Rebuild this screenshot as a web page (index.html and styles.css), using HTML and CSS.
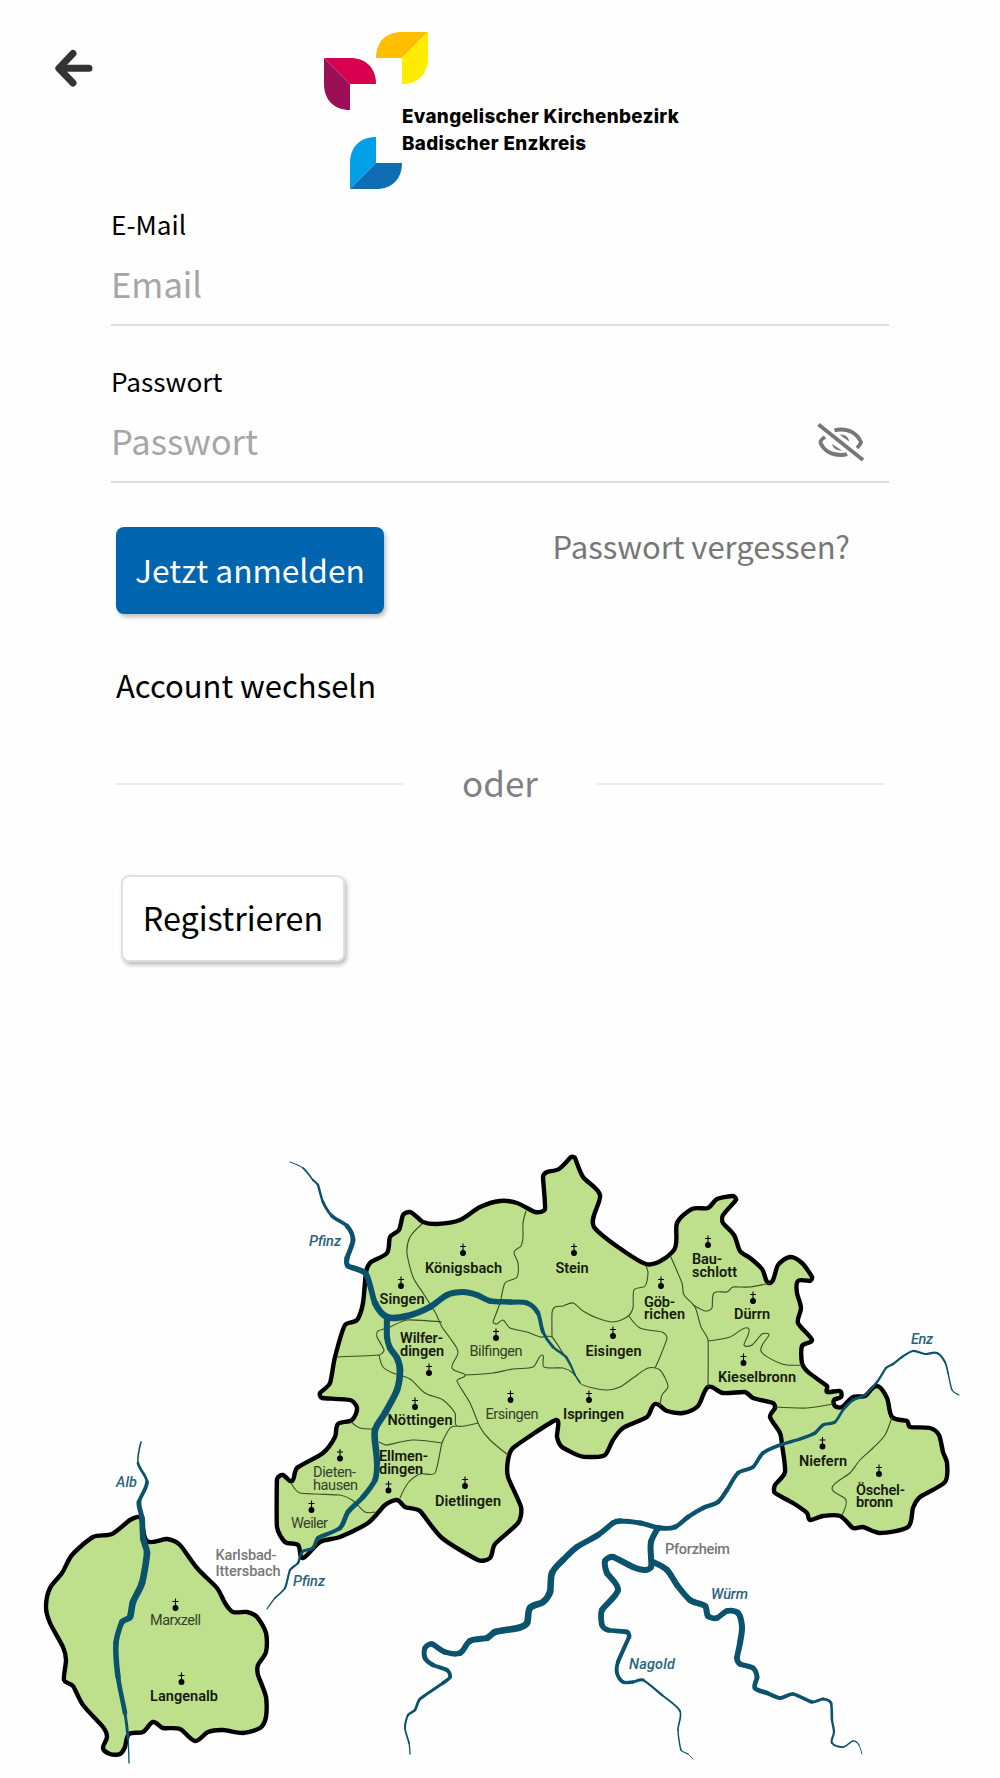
FILE: index.html
```html
<!DOCTYPE html>
<html lang="de">
<head>
<meta charset="utf-8" />
<title>Anmelden</title>
<link rel="stylesheet" href="styles.css">
</head>
<body>
<header class="top">
	<a class="back" href="#" aria-label="Zurück">
		<svg width="40" height="40" viewBox="0 0 40 40"><path d="M35 20.3H6M19 5.5L4.8 20.3L19 35" /></svg>
	</a>
	<svg class="logo" width="360" height="160" viewBox="0 0 360 160">
		<path fill="#ffbf00" d="M78 0H104L78 26H52C52 10 62 0 78 0Z" />
		<path fill="#ffed00" d="M104 0V26C104 42 94 52 78 52V26Z" />
		<path fill="#d6004f" d="M0 26H26C42 26 52 36 52 52H26Z" />
		<path fill="#9c0f57" d="M0 26L26 52V78C10 78 0 68 0 52Z" />
		<path fill="#009fe6" d="M52 105V131L26 157V131C26 115 36 105 52 105Z" />
		<path fill="#0f6db4" d="M52 131H78C78 147 68 157 52 157H26Z" />
		<text x="78" y="91.2" textLength="277">Evangelischer Kirchenbezirk</text>
		<text x="78" y="118" textLength="184">Badischer Enzkreis</text>
	</svg>
</header>

<form class="login">
	<label for="email">E-Mail</label>
	<div class="field"><input id="email" type="email" placeholder="Email" /></div>
	<label for="password">Passwort</label>
	<div class="field">
		<input id="password" type="password" placeholder="Passwort" />
		<svg class="eye" width="50" height="46" viewBox="0 0 50 46">
			<path d="M9 18C6 20 4 22 4.500 24C8 32 16 36 25 36C28 36 29 36 31 35M18.500 11.500C20 11 22 10.500 25 10.500C34 10.500 42 15 45 23.500C44 26 43 27 41 29" />
			<path class="pupil" d="M23.500 15.500C29 15 33 18 33 22.500ZM16 25C17 29 20 31.500 26 31.500Z" />
			<path d="M2.500 5.500L47 41" />
		</svg>
	</div>
	<div class="actions">
		<button class="btn primary" type="button">Jetzt anmelden</button>
		<a class="forgot" href="#">Passwort vergessen?</a>
	</div>
	<a class="switch" href="#">Account wechseln</a>
	<div class="or"><span>oder</span></div>
	<button class="btn register" type="button">Registrieren</button>
</form>

<svg class="map" width="1000" height="658" viewBox="0 1120 1000 658">
	<defs>
		<g id="church"><circle r="2.4" /><path d="M0 0V-9.5M-3 -6.5H3" /></g>
	</defs>
	<g class="region">
		<path data-close="1" data-pts="366,1272 371,1262 387,1253 390,1237 399,1230 403,1215 410,1212 417,1217 423,1222 437,1224 460,1220 480,1207 500,1201 517,1203 535,1212 545,1209 543,1177 547,1172 559,1169 571,1157 575,1158 583,1177 600,1195 594,1227 646,1264 674,1250 677,1223 692,1209 708,1208 717,1199 733,1196 736,1200 723,1215 723,1223 734,1235 740,1251 750,1258 762,1269 770,1283 778,1265 790,1257 802,1263 812,1277 810,1281 798,1281 797,1293 801,1308 798,1323 812,1340 802,1346 802,1363 808,1372 827,1386 827,1392 840,1391 841,1397 834,1400 835,1406 842,1407 853,1397 865,1396 877,1386 887,1398 892,1417 907,1421 910,1427 930,1428 939,1435 943,1452 947,1463 945,1482 920,1497 913,1508 908,1527 880,1533 863,1527 853,1528 840,1516 823,1516 810,1520 807,1513 793,1503 775,1493 775,1485 785,1472 782,1445 780,1433 770,1417 775,1408 773,1403 753,1398 745,1392 723,1393 708,1387 698,1406 683,1413 667,1411 655,1404 647,1417 623,1428 613,1440 605,1455 592,1457 580,1456 562,1447 557,1437 556,1420 513,1448 508,1460 508,1477 521,1507 518,1523 495,1544 490,1558 478,1560 442,1538 420,1511 405,1507 397,1500 385,1505 368,1523 340,1537 320,1542 303,1558 298,1545 285,1542 277,1527 277,1479 283,1475 292,1481 297,1468 323,1453 335,1437 338,1424 352,1420 357,1408 350,1400 322,1398 320,1393 330,1383 335,1357 345,1325 357,1320 363,1303" />
		<path data-close="1" data-pts="141,1518 130,1520 112,1534 93,1537 72,1555 62,1573 50,1588 46,1607 50,1623 63,1647 66,1660 64,1680 73,1686 83,1705 103,1727 107,1737 103,1748 110,1754 120,1754 125,1747 129,1734 143,1732 153,1722 163,1728 180,1729 195,1741 208,1732 223,1730 243,1733 260,1728 266,1717 266,1697 258,1675 258,1665 266,1652 266,1633 257,1617 247,1612 233,1612 225,1603 217,1588 197,1568 180,1545 167,1539 147,1541" />
	</g>
	<g class="border">
		<path data-pts="422,1224 410,1237 407,1253 413,1277 423,1293 435,1312 442,1327 450,1338 458,1352 452,1368 465,1375 457,1381 470,1403 480,1427 490,1440 508,1455" />
		<path data-pts="526,1211 523,1223 523,1237 521,1246 514,1252 518,1263 517,1277 505,1283 500,1303 493,1322 497,1324 503,1320 510,1328 527,1332 540,1337 552,1337 567,1360 580,1383 593,1388 607,1390 620,1387 633,1378 648,1368 660,1370 668,1386 662,1395 660,1406" />
		<path data-pts="552,1337 552,1313 555,1307 563,1306 573,1303 583,1311 597,1318 613,1322 627,1317 633,1308 634,1290 645,1286 648,1273 646,1266" />
		<path data-pts="629,1316 640,1328 662,1332 667,1338 660,1357 655,1368" />
		<path data-pts="670,1255 682,1283 684,1295 695,1307 701,1327 708,1340 708,1387" />
		<path data-pts="693,1305 705,1311 712,1308 714,1293 727,1292 733,1287 750,1287 770,1283" />
		<path data-pts="708,1341 730,1337 748,1328 744,1345 752,1345 762,1334 769,1335 761,1351 782,1364 802,1365" />
		<path data-pts="775,1407 807,1408 833,1404" />
		<path data-pts="892,1417 885,1435 873,1448 860,1460 850,1473 832,1488 846,1500 842,1515" />
		<path data-pts="337,1357 379,1355 384,1350 377,1337 378,1331 390,1327 407,1320 442,1322" />
		<path data-pts="379,1355 383,1367 393,1373 410,1379 425,1393 443,1400 455,1413 457,1426 478,1423" />
		<path data-pts="457,1426 450,1428 442,1443 435,1473 420,1474 408,1483 400,1498" />
		<path data-pts="379,1442 387,1445 413,1440 442,1443" />
		<path data-pts="351,1422 360,1428 373,1429" />
		<path data-pts="291,1483 300,1493 340,1495 352,1500 365,1512 375,1512" />
		<path data-pts="465,1375 493,1373 513,1369 533,1367 542,1355 544,1367 563,1368 573,1373 580,1383" />
	</g>
	<!-- third value of a river point is its width -->
	<g class="river">
		<path data-pts="290,1162,.7 303,1168,1.2 313,1180,1.8 318,1185,2 323,1202,2.5 332,1216,3 347,1226,4 353,1240,4.5 347,1258,4.5 348,1266,5 366,1274,5 375,1303,5.5 387,1317,6 407,1316,6 430,1307,5.5 447,1295,5.5 463,1292,5.5 477,1295,5.5 490,1301,5 510,1302,5 527,1303,4.5 538,1313,4 543,1332,3 553,1347,2.5 567,1358,2 575,1375,1.5 580,1382,.7" />
		<path data-pts="387,1317,5.5 387,1337,5.5 390,1348,5.5 397,1358,6 400,1370,6 397,1390,6 385,1413,6 375,1430,6 376,1450,6 377,1463,5.5 375,1480,5 363,1497,4.5 348,1512,4.5 340,1528,4 318,1538,3.5 313,1548,3 302,1552,2.5 298,1563,2 290,1570,2 285,1588,1.8 275,1598,1.3 267,1609,.8" />
		<path data-pts="141,1442,.8 138,1463,2 147,1482,3 139,1502,4 142,1518,5 143,1538,5.5 147,1553,6 142,1583,6 133,1602,6 130,1617,6 122,1622,5 116,1643,5 118,1677,5 125,1713,3.5 128,1738,1.8 129,1763,.6" />
		<path data-pts="959,1395,.8 952,1390,1.2 948,1373,1.4 945,1362,1.7 937,1353,2 925,1354,2 913,1351,2 902,1357,2 893,1364,2 886,1368,2 877,1382,2 865,1395,2.5 853,1400,2.5 843,1410,2.5 835,1422,2.5 823,1425,3 815,1433,3 800,1439,3 780,1445,3 763,1453,3.5 753,1467,3.5 738,1473,3.5 727,1490,4 718,1502,4 703,1508,4 688,1517,4.2 675,1527,4.2 660,1528,4.5 640,1523,4.5 620,1521,4.8 613,1523,5 598,1535,5 577,1547,5.5 563,1560,5.5 552,1573,6 550,1592,6 543,1602,6 530,1608,6 527,1623,6 518,1628,6 495,1632,6 487,1638,5.5 470,1641,5.5 460,1653,5 445,1652,5 432,1644,5 425,1648,4.5 425,1658,4.5 433,1665,4 447,1670,3.5 450,1677,3.5 443,1683,3 420,1699,2.5 415,1710,2.5 408,1715,2 405,1728,1.8 409,1743,1.4 410,1754,1" />
		<path data-pts="658,1528,5.5 651,1542,5.5 651,1557,5.5 651,1567,5.5 645,1570,5.5 633,1567,5.5 613,1557,5.5 605,1561,5.5 607,1573,5.5 618,1590,5.5 602,1610,5.5 602,1625,5 608,1630,4.5 627,1632,4.2 629,1637,4 618,1662,3.5 617,1673,3.5 623,1682,3.2 633,1682,3 643,1680,2.5 662,1695,1.8 680,1711,1.6 678,1730,1.4 681,1750,1.2 688,1754,1 693,1759,.7" />
		<path data-pts="653,1562,5.5 667,1570,5.5 677,1585,5.5 690,1600,5.5 705,1606,5.5 708,1616,5.5 717,1618,5 727,1611,5 738,1613,5.5 742,1627,5.5 740,1643,5.5 737,1658,5 740,1664,5 753,1668,4.5 757,1677,4.5 755,1688,4.2 767,1693,4 780,1698,3.5 793,1694,3.2 812,1702,3 823,1699,2.7 831,1703,2.5 832,1720,2.2 834,1732,2 832,1743,1.8 843,1747,1.5 853,1741,1.3 859,1745,1 862,1754,.7" />
	</g>
	<g class="church">
		<use href="#church" x="401" y="1286" /><use href="#church" x="463" y="1253" />
		<use href="#church" x="574" y="1253" /><use href="#church" x="429" y="1373" />
		<use href="#church" x="496" y="1338" /><use href="#church" x="613" y="1336" />
		<use href="#church" x="708" y="1245" /><use href="#church" x="661" y="1286" />
		<use href="#church" x="753" y="1301" /><use href="#church" x="743.5" y="1363" />
		<use href="#church" x="510.5" y="1400" /><use href="#church" x="589" y="1400" />
		<use href="#church" x="415" y="1407" /><use href="#church" x="388.5" y="1490.5" />
		<use href="#church" x="340" y="1458.5" /><use href="#church" x="311.5" y="1510" />
		<use href="#church" x="465" y="1486" /><use href="#church" x="822.5" y="1446.5" />
		<use href="#church" x="879" y="1474" /><use href="#church" x="175.5" y="1608" />
		<use href="#church" x="181.5" y="1682" />
	</g>
	<g class="town">
		<text x="379.5" y="1303.5" textLength="45">Singen</text>
		<text x="425" y="1272.5" textLength="77">Königsbach</text>
		<text x="555.5" y="1272.5" textLength="33">Stein</text>
		<text x="400" y="1342.5" textLength="43">Wilfer-</text>
		<text x="400" y="1355.5" textLength="44">dingen</text>
		<text x="585.5" y="1355.5" textLength="56">Eisingen</text>
		<text x="692" y="1264" textLength="30">Bau-</text>
		<text x="692" y="1276.5" textLength="45">schlott</text>
		<text x="644" y="1306.5" textLength="31">Göb-</text>
		<text x="644" y="1318.5" textLength="41">richen</text>
		<text x="734" y="1318.5" textLength="36">Dürrn</text>
		<text x="718" y="1381.5" textLength="78">Kieselbronn</text>
		<text x="563" y="1419" textLength="61">Ispringen</text>
		<text x="387.5" y="1424.5" textLength="65">Nöttingen</text>
		<text x="379" y="1461" textLength="49">Ellmen-</text>
		<text x="379" y="1474" textLength="44">dingen</text>
		<text x="435" y="1506" textLength="66">Dietlingen</text>
		<text x="799" y="1465.5" textLength="48">Niefern</text>
		<text x="856" y="1494.5" textLength="49">Öschel-</text>
		<text x="856" y="1506.5" textLength="37">bronn</text>
		<text x="150" y="1700.5" textLength="68">Langenalb</text>
	</g>
	<g class="town small">
		<text x="469.5" y="1355.5" textLength="53">Bilfingen</text>
		<text x="485.5" y="1419" textLength="53">Ersingen</text>
		<text x="313" y="1476.5" textLength="43">Dieten-</text>
		<text x="313" y="1489.5" textLength="45">hausen</text>
		<text x="291" y="1528" textLength="37">Weiler</text>
		<text x="150" y="1624.5" textLength="51">Marxzell</text>
	</g>
	<g class="town outside">
		<text x="665" y="1553.5" textLength="65">Pforzheim</text>
		<text x="215.5" y="1559.5" textLength="61">Karlsbad-</text>
		<text x="215.5" y="1576" textLength="65">Ittersbach</text>
	</g>
	<g class="town water">
		<text x="309" y="1245.5" textLength="32">Pfinz</text>
		<text x="293" y="1585.5" textLength="32">Pfinz</text>
		<text x="911" y="1343.5" textLength="22">Enz</text>
		<text x="711" y="1598.5" textLength="37">Würm</text>
		<text x="629" y="1669" textLength="46">Nagold</text>
		<text x="116" y="1487" textLength="21">Alb</text>
	</g>
</svg>
<script src="map.js"></script>
</body>
</html>
```
FILE: styles.css
```css
* {
	box-sizing: border-box;
}

body {
	margin: 0;
	width: 1000px;
	height: 1778px;
	overflow: hidden;
	background-color: #fefefe;
	color: #000;
	font-family: "Noto Sans CJK SC", sans-serif;
	display: flex;
	flex-direction: column;
}

a {
	color: inherit;
	text-decoration: none;
}

.top {
	height: 206px;
	display: flex;
	align-items: flex-start;
	padding: 31.5px 0 0 54px;
}

.back {
	width: 40px;
	height: 40px;
	margin: 16.5px 230px 0 0;
}

.back path {
	fill: none;
	stroke: #333;
	stroke-width: 7;
	stroke-linecap: round;
	stroke-linejoin: round;
}

.logo text {
	font-family: Inter, sans-serif;
	font-weight: 800;
	font-size: 18.8px;
}

.login {
	height: 914px;
	padding: 0 111px;
	display: flex;
	flex-direction: column;
	align-items: flex-start;
}

.login label {
	font-size: 26.2px;
	line-height: 36px;
}

.field {
	width: 778px;
	height: 84px;
	margin-bottom: 37px;
	border-bottom: 2px solid #dedede;
	display: flex;
	align-items: center;
}

.field input {
	flex: 1;
	border: 0;
	padding: 0;
	background: none;
	font-family: inherit;
	font-size: 34.6px;
	line-height: 50px;
}

.field input::placeholder {
	color: #a6a6a6;
}

.eye {
	margin: 3px 23px 0 0;
	fill: none;
	stroke: #777;
	stroke-width: 3.8;
}

.eye .pupil {
	fill: #777;
	stroke: none;
}

.actions {
	width: 778px;
	margin-top: 7px;
	padding-left: 5px;
	display: flex;
	justify-content: space-between;
}

.btn {
	height: 87px;
	border: 0;
	border-radius: 8px;
	padding: 0 0 4px;
	font-family: inherit;
	font-size: 32.3px;
	box-shadow: 2px 3px 4px rgba(0, 0, 0, .25);
}

.primary {
	width: 268px;
	background-color: #0064af;
	color: #fff;
	font-size: 31.7px;
}

.forgot {
	margin-right: 39px;
	font-size: 31px;
	line-height: 37px;
	color: #777;
}

.switch {
	margin: 51px 0 0 5px;
	font-size: 31px;
	line-height: 40px;
}

.or {
	width: 768px;
	margin: 52px 0 0 5px;
	display: flex;
	align-items: center;
	font-size: 35px;
	line-height: 50px;
	color: #808080;
}

.or span {
	flex: 1;
	padding-bottom: 4px;
	text-align: center;
}

.or:before,
.or:after {
	content: "";
	width: 287px;
	height: 2px;
	background-color: #ececec;
}

.register {
	width: 224px;
	margin: 64px 0 0 10px;
	border: 2px solid #e0e0e0;
	background-color: #fff;
	color: #000;
}

.map {
	display: block;
}

.region path {
	fill: #bedf8b;
	stroke: #000;
	stroke-width: 4.4;
	stroke-linejoin: round;
}

.border path {
	fill: none;
	stroke: #3c4f26;
	stroke-width: 1.1;
}

.river path {
	fill: none;
	stroke: #0b536c;
	stroke-linecap: round;
}

.church {
	stroke: #000;
	stroke-width: 1.1;
}

.town {
	font-family: Roboto, sans-serif;
	font-size: 14.5px;
	font-weight: 600;
	fill: #151a10;
}

.small {
	font-weight: 400;
	fill: #34402a;
}

.outside {
	font-weight: 500;
	fill: #777;
}

.water {
	font-weight: 500;
	font-style: italic;
	fill: #2a6478;
}
```
FILE: map.js
```js
// handle of a curve at b, along a -> c, never longer than the shorter side
function handle(a, b, c) {
	var dx = c[0] - a[0], dy = c[1] - a[1];
	var len = Math.hypot(dx, dy) || 1;
	var side = Math.min(Math.hypot(b[0] - a[0], b[1] - a[1]), Math.hypot(c[0] - b[0], c[1] - b[1]));
	return [dx / len * side * 0.3, dy / len * side * 0.3];
}

// smooth curve through p[i] and p[i + 1]
function curve(p, i, closed) {
	var n = p.length;
	function at(k) {
		return closed ? p[(k + n) % n] : p[Math.max(0, Math.min(n - 1, k))];
	}
	var b = at(i), c = at(i + 1);
	var h1 = handle(at(i - 1), b, c), h2 = handle(b, c, at(i + 2));
	return "C" + [
		b[0] + h1[0], b[1] + h1[1],
		c[0] - h2[0], c[1] - h2[1],
		c[0], c[1]
	].join(" ");
}

document.querySelectorAll("[data-pts]").forEach(function (el) {
	var closed = !!el.dataset.close;
	var p = el.dataset.pts.split(" ").map(function (s) {
		return s.split(",").map(Number);
	});
	var n = closed ? p.length : p.length - 1;
	if (p[0].length == 3) {
		// rivers get thinner, so every piece is a path of its own
		for (var i = 0; i < n; i++) {
			var piece = document.createElementNS("http://www.w3.org/2000/svg", "path");
			piece.setAttribute("d", "M" + p[i][0] + " " + p[i][1] + curve(p, i, false));
			piece.setAttribute("stroke-width", (p[i][2] + p[i + 1][2]) * 0.55);
			el.parentNode.appendChild(piece);
		}
		el.remove();
		return;
	}
	var d = "M" + p[0][0] + " " + p[0][1];
	for (var j = 0; j < n; j++) d += curve(p, j, closed);
	el.setAttribute("d", d + (closed ? "Z" : ""));
});
```
